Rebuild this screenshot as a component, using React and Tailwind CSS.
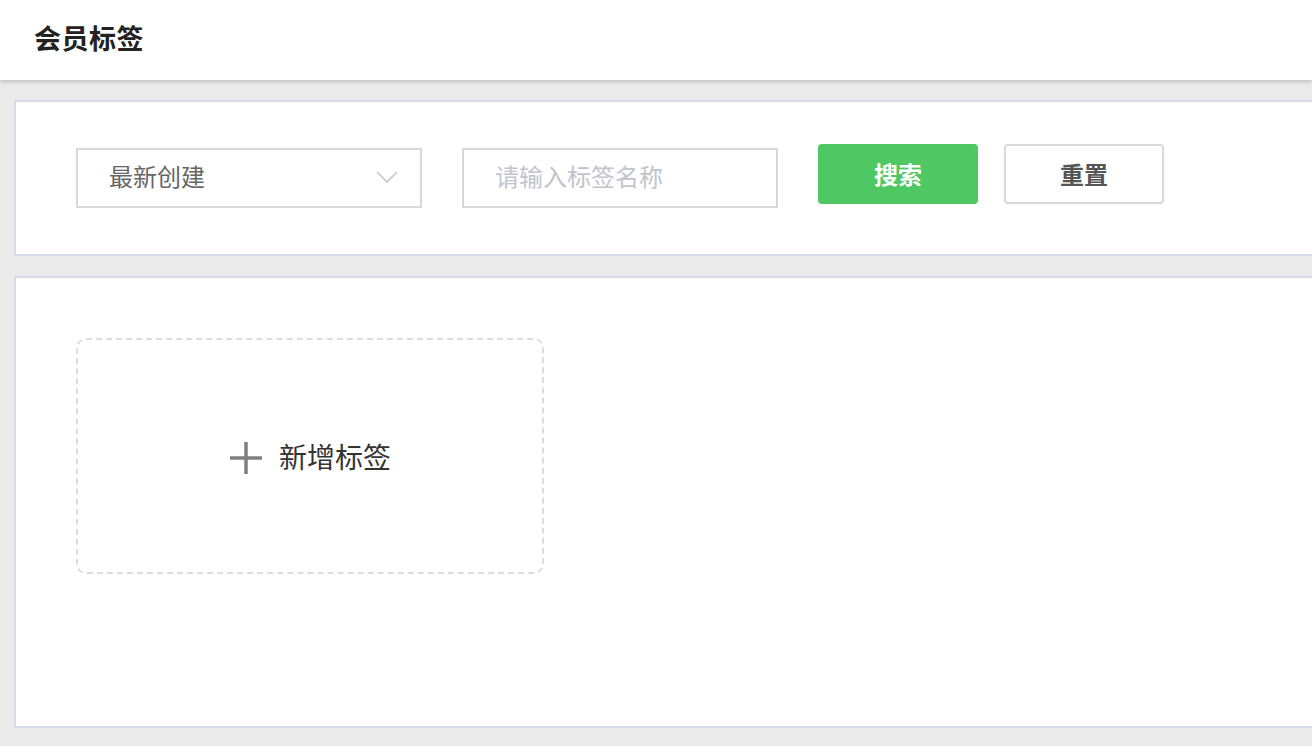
import React from "react";

export default function App() {
  return (
    <div
      className="w-[1312px] h-[746px] overflow-hidden bg-[#ebebeb] flex flex-col"
      style={{ fontFamily: '"Noto Sans CJK SC", "Noto Sans", sans-serif' }}
    >
      <header className="h-[80px] shrink-0 bg-white flex items-center pl-[34px] pb-[3px] shadow-[0_2px_4px_rgba(0,0,0,0.18)] relative z-10">
        <h1 className="text-[27px] font-bold text-[#222] tracking-[0.5px]">会员标签</h1>
      </header>

      <section className="mt-[20px] ml-[14px] w-[1320px] h-[156px] shrink-0 bg-white border-2 border-[#d5dce6] flex items-center pl-[60px] gap-[40px]">
        <div className="w-[346px] h-[60px] border-2 border-[#d9d9d9] flex items-center justify-between pl-[31px] pr-[22px]">
          <span className="text-[24px] text-[#666] -mt-[4px]">最新创建</span>
          <svg width="22" height="12" viewBox="0 0 22 12" fill="none" className="-mt-[3px]">
            <path d="M1 1 L11 11 L21 1" stroke="#c0c4cc" strokeWidth="1.5" />
          </svg>
        </div>
        <div className="w-[316px] h-[60px] border-2 border-[#d9d9d9] flex items-center pl-[31px]">
          <span className="text-[24px] text-[#c0c4cc] -mt-[4px]">请输入标签名称</span>
        </div>
        <div className="flex items-center gap-[26px] -mt-[9px]">
          <button className="w-[160px] h-[60px] rounded-[4px] bg-[#4fc863] text-white text-[24px] font-bold">搜索</button>
          <button className="w-[160px] h-[60px] rounded-[4px] border-2 border-[#d9d9d9] bg-white text-[#555] text-[24px] font-bold">重置</button>
        </div>
      </section>

      <section className="mt-[20px] ml-[14px] w-[1320px] h-[452px] shrink-0 bg-white border-2 border-[#d5dce6] pl-[60px] pt-[60px]">
        <div className="w-[468px] h-[236px] border-2 border-dashed border-[#dcdcdc] rounded-[10px] flex items-center justify-center gap-[16px]">
          <svg width="34" height="34" viewBox="0 0 34 34" fill="none" className="mt-[4px]">
            <path d="M17 1 V33 M1 17 H33" stroke="#808080" strokeWidth="3.5" />
          </svg>
          <span className="text-[28px] text-[#333]">新增标签</span>
        </div>
      </section>
    </div>
  );
}
